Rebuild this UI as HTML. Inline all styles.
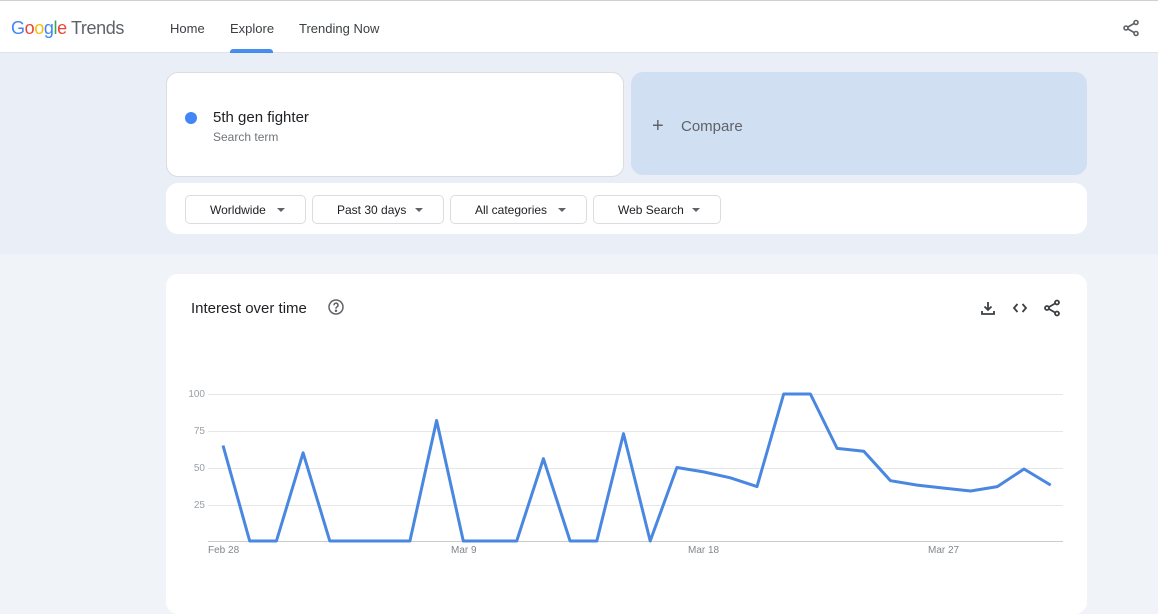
<!DOCTYPE html>
<html><head><meta charset="utf-8"><style>
*{margin:0;padding:0;box-sizing:border-box}
body{width:1158px;height:598px;overflow:hidden;background:#f0f3f8;font-family:"Liberation Sans",sans-serif;position:relative}
.hdr{position:absolute;left:0;top:0;width:1158px;height:53px;background:#fff;border-top:1px solid #d0d0d0;border-bottom:1px solid #e0e4ea}
.band{position:absolute;left:0;top:53px;width:1158px;height:201px;background:#e9eef7}
.nav{position:absolute;top:20px;font-size:13px;color:#3c4043}
.card{position:absolute;background:#fff;border-radius:12px}
.dd{position:absolute;top:195px;height:29px;border:1px solid #dadce0;border-radius:5px;font-size:12px;color:#202124;line-height:28px;padding-left:24px}
.dd:after{content:"";position:absolute;top:12px;right:20px;border-left:4px solid transparent;border-right:4px solid transparent;border-top:4px solid #5f6368}
</style></head><body>
<div class="hdr">
<div style="position:absolute;left:11px;top:17px;font-size:18px;letter-spacing:-0.4px"><span style="color:#4285f4">G</span><span style="color:#ea4335">o</span><span style="color:#fbbc05">o</span><span style="color:#4285f4">g</span><span style="color:#34a853">l</span><span style="color:#ea4335">e</span> <span style="color:#5f6368">Trends</span></div>
<div class="nav" style="left:170px">Home</div>
<div class="nav" style="left:230px">Explore</div>
<div style="position:absolute;left:230px;top:48px;width:43px;height:4px;background:#1a73e8;border-radius:3px 3px 0 0;opacity:.8"></div>
<div class="nav" style="left:299px">Trending Now</div>
<svg style="position:absolute;left:1122px;top:18px" width="18" height="18" viewBox="0 0 18 18" fill="none" stroke="#5f6368" stroke-width="1.6"><circle cx="14" cy="3.5" r="2"/><circle cx="4" cy="9" r="2"/><circle cx="14" cy="14.5" r="2"/><path d="M6 8 12 4.5M6 10l6 3.5"/></svg>
</div>
<div class="band"></div>
<div class="card" style="left:166px;top:72px;width:458px;height:105px;border:1px solid #dadce0">
<div style="position:absolute;left:18px;top:39px;width:12px;height:12px;border-radius:50%;background:#4285f4"></div>
<div style="position:absolute;left:46px;top:36px;font-size:15px;color:#202124">5th gen fighter</div>
<div style="position:absolute;left:46px;top:57px;font-size:12px;color:#70757a">Search term</div>
</div>
<div style="position:absolute;left:631px;top:72px;width:456px;height:103px;border-radius:12px;background:#d1dff3">
<div style="position:absolute;left:21px;top:44px;font-size:20px;color:#5f6368;line-height:20px">+</div>
<div style="position:absolute;left:50px;top:46px;font-size:15px;color:#5f6368">Compare</div>
</div>
<div class="card" style="left:166px;top:183px;width:921px;height:51px"></div>
<div class="dd" style="left:185px;width:121px">Worldwide</div>
<div class="dd" style="left:312px;width:132px">Past 30 days</div>
<div class="dd" style="left:450px;width:137px">All categories</div>
<div class="dd" style="left:593px;width:128px">Web Search</div>
<div class="card" style="left:166px;top:274px;width:921px;height:340px">
<div style="position:absolute;left:25px;top:26px;font-size:15px;color:#202124">Interest over time</div>
<svg style="position:absolute;left:162px;top:25px" width="16" height="16" viewBox="0 0 16 16" fill="none" stroke="#5f6368" stroke-width="1.5"><circle cx="8" cy="8" r="7"/><path d="M6 6.2a2 2 0 1 1 2.8 1.8c-.6.3-.8.7-.8 1.3v.5"/><circle cx="8" cy="11.8" r=".5" fill="#5f6368"/></svg>
<svg style="position:absolute;left:814px;top:26px" width="16" height="16" viewBox="0 0 16 16" fill="none" stroke="#3c4043" stroke-width="1.8"><path d="M8 2v8M4.5 6.5 8 10l3.5-3.5M2 11v3h12v-3"/></svg>
<svg style="position:absolute;left:846px;top:26px" width="16" height="16" viewBox="0 0 16 16" fill="none" stroke="#3c4043" stroke-width="1.8"><path d="M5.5 4 2 8l3.5 4M10.5 4 14 8l-3.5 4"/></svg>
<svg style="position:absolute;left:877px;top:25px" width="18" height="18" viewBox="0 0 18 18" fill="none" stroke="#3c4043" stroke-width="1.8"><circle cx="14" cy="3.5" r="2"/><circle cx="4" cy="9" r="2"/><circle cx="14" cy="14.5" r="2"/><path d="M6 8 12 4.5M6 10l6 3.5"/></svg>
</div>
<svg style="position:absolute;left:0;top:0" width="1158" height="598">
<g stroke="#e6e6e6" stroke-width="1"><path d="M208 394.5H1063M208 431.5H1063M208 468.5H1063M208 505.5H1063"/></g>
<path d="M208 541.5H1063" stroke="#ccc"/>
<g font-size="10" fill="#9aa0a6" font-family="Liberation Sans,sans-serif" text-anchor="end"><text x="205" y="397">100</text><text x="205" y="434">75</text><text x="205" y="471">50</text><text x="205" y="508">25</text></g>
<g font-size="10" fill="#80868b" font-family="Liberation Sans,sans-serif"><text x="208" y="553">Feb 28</text><text x="451" y="553">Mar 9</text><text x="688" y="553">Mar 18</text><text x="928" y="553">Mar 27</text></g>
<polyline fill="none" stroke="#4a87e0" stroke-width="3" stroke-linejoin="round" points="223,445.5 249.7,541 276.4,541 303.1,452.8 329.8,541 356.5,541 383.2,541 409.9,541 436.6,420.5 463.3,541 490,541 516.7,541 543.4,458.7 570.1,541 596.8,541 623.5,433.7 650.2,541 676.9,467.5 703.6,471.9 730.3,477.8 757,486.6 783.7,394 810.4,394 837.1,448.4 863.8,451.3 890.5,480.7 917.2,485.1 943.9,488.1 970.6,491 997.3,486.6 1024,469 1050.7,485.1"/>
</svg>
</body></html>
